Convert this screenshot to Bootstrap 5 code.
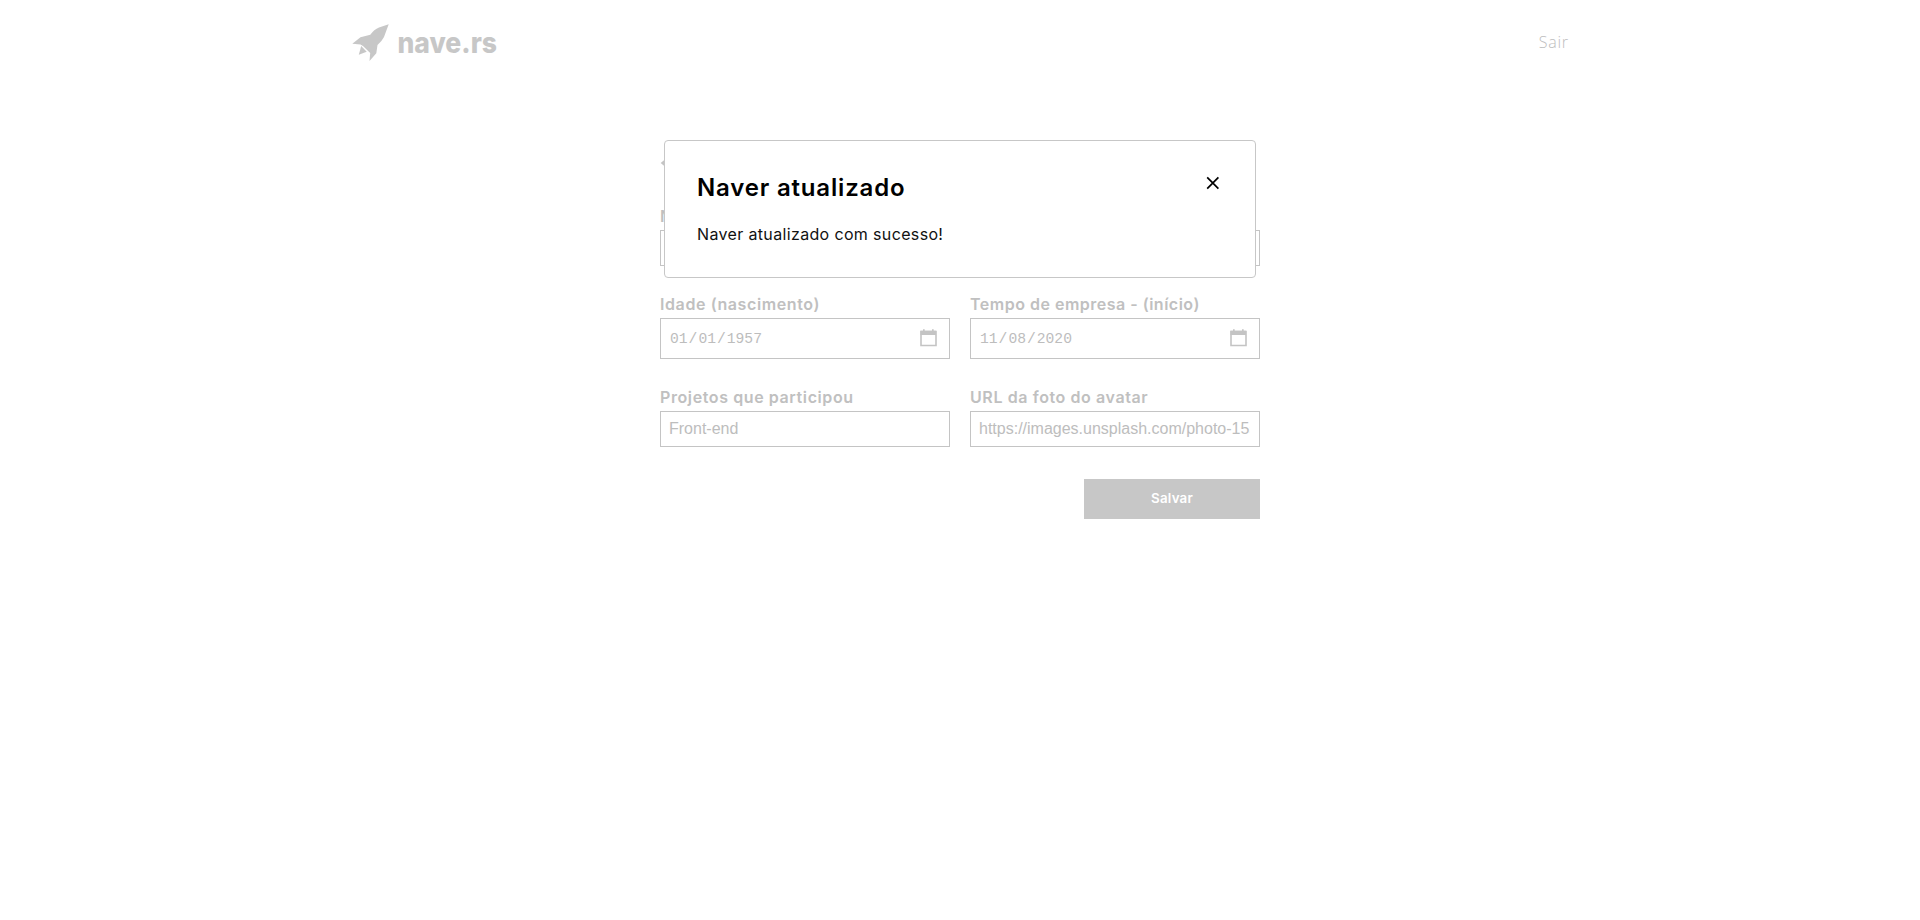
<!DOCTYPE html>
<html lang="pt-BR">
<head>
<meta charset="utf-8">
<title>nave.rs</title>
<link href="https://cdn.jsdelivr.net/npm/bootstrap@5.3.0/dist/css/bootstrap.min.css" rel="stylesheet">
<style>
body{font-family:Inter,"Open Sans",sans-serif;color:#000;background:#fff;min-height:920px}
.topbar{height:84px;padding:0 352px}
.sair{font:300 16px/20px "Open Sans",sans-serif;color:#bdbdbd;letter-spacing:.75px;margin-right:-.75px}
.naver-form{width:600px;padding-top:68px}
.back-row{height:58px;padding-top:5px}
.fields{display:grid;grid-template-columns:290px 290px;column-gap:20px;row-gap:28px}
.field-label{display:block;height:24px;font-size:16px;line-height:20px;font-weight:600;color:#c0c0c0;white-space:nowrap;letter-spacing:.6px}
.field-label.long{letter-spacing:.5px}
.field-box{height:36px;padding:0 9px 0 8px;border:1px solid #c4c4c4;border-radius:0;background:#fff;color:#bdbdbd;font:16px/33px "Liberation Sans",sans-serif}
.date-box{height:41px;padding:0 12px 0 9px;font:14.67px/41px "Liberation Mono",monospace}
.date-box span{padding-top:2px}
.date-box svg{margin-bottom:2px}
.date-box i{font-style:normal;margin:0 1px}
.save-btn{width:176px;height:40px;margin-top:32px;background:#c7c7c7;color:#fff;font-size:13.33px;font-weight:600;border-radius:0;padding:0;letter-spacing:.2px}
.notice{top:140px;left:664px;width:592px;height:138px;border:1px solid #c7c7c7;border-radius:4px;padding:31px 33px 31px 32px}
.notice h1{font-size:24px;line-height:32px;font-weight:600;margin:0;letter-spacing:.82px}
.notice p{font-size:16px;line-height:24px;font-weight:400;margin:18px 0 0;color:#111;letter-spacing:.35px}
.close-x{width:18px;height:18px;margin-top:2px}
</style>
</head>
<body>
<header class="topbar d-flex justify-content-between align-items-center">
  <svg class="overflow-visible" width="148" height="40" viewBox="0 0 148 40" fill="#c7c7c7">
    <path d="M36.7 2.2 27 5.5Q22 7.5 18.3 12.8L8.5 15.3.3 21.7 8.5 22.5 11 24 18.2 31 17.5 39 24.3 31.3 25.5 23Q30 19 32 15Z"/>
    <path d="M9.2 24 6.8 32.8 14.7 29.8Z"/>
    <text x="45.5" y="30.5" font-family="Inter,sans-serif" font-weight="800" font-size="29" textLength="99.5" lengthAdjust="spacingAndGlyphs">nave.rs</text>
  </svg>
  <a class="sair text-decoration-none" href="#">Sair</a>
</header>
<main class="naver-form mx-auto">
  <div class="back-row" style="height:54px"><svg class="d-block" width="12" height="12" viewBox="0 0 12 12"><path d="M9 1 3 6 9 11" fill="none" stroke="#c4c4c4" stroke-width="3"/></svg></div>
  <div class="fields">
    <div style="grid-column:1/3"><label class="field-label">Nome</label><div class="field-box"></div></div>
    <div><label class="field-label">Idade (nascimento)</label>
      <div class="field-box date-box d-flex justify-content-between align-items-center"><span>01<i>/</i>01<i>/</i>1957</span>
      <svg width="17" height="18" viewBox="0 0 17 18"><path d="M1 2.5H16V16.5H1Z" fill="none" stroke="#c4c4c4" stroke-width="1.6"/><path d="M.5 1.8H16V6H.5ZM3 .2H4.7V2H3ZM12 .2H13.7V2H12Z" fill="#c4c4c4"/></svg></div></div>
    <div><label class="field-label long">Tempo de empresa - (início)</label>
      <div class="field-box date-box d-flex justify-content-between align-items-center"><span>11<i>/</i>08<i>/</i>2020</span>
      <svg width="17" height="18" viewBox="0 0 17 18"><path d="M1 2.5H16V16.5H1Z" fill="none" stroke="#c4c4c4" stroke-width="1.6"/><path d="M.5 1.8H16V6H.5ZM3 .2H4.7V2H3ZM12 .2H13.7V2H12Z" fill="#c4c4c4"/></svg></div></div>
    <div><label class="field-label">Projetos que participou</label><div class="field-box">Front-end</div></div>
    <div><label class="field-label">URL da foto do avatar</label><div class="field-box"><div class="overflow-hidden text-nowrap">https://images.unsplash.com/photo-15s</div></div></div>
  </div>
  <div class="d-flex justify-content-end"><button class="btn save-btn">Salvar</button></div>
</main>
<section class="notice position-absolute bg-white" role="dialog">
  <div class="d-flex justify-content-between"><h1>Naver atualizado</h1>
    <svg class="close-x" viewBox="0 0 18 18"><path d="M3.2 3.4 14.4 14.6M14.4 3.4 3.2 14.6" stroke="#000" stroke-width="1.7" fill="none"/></svg></div>
  <p>Naver atualizado com sucesso!</p>
</section>
<script src="https://cdn.jsdelivr.net/npm/bootstrap@5.3.0/dist/js/bootstrap.bundle.min.js"></script>
</body>
</html>
